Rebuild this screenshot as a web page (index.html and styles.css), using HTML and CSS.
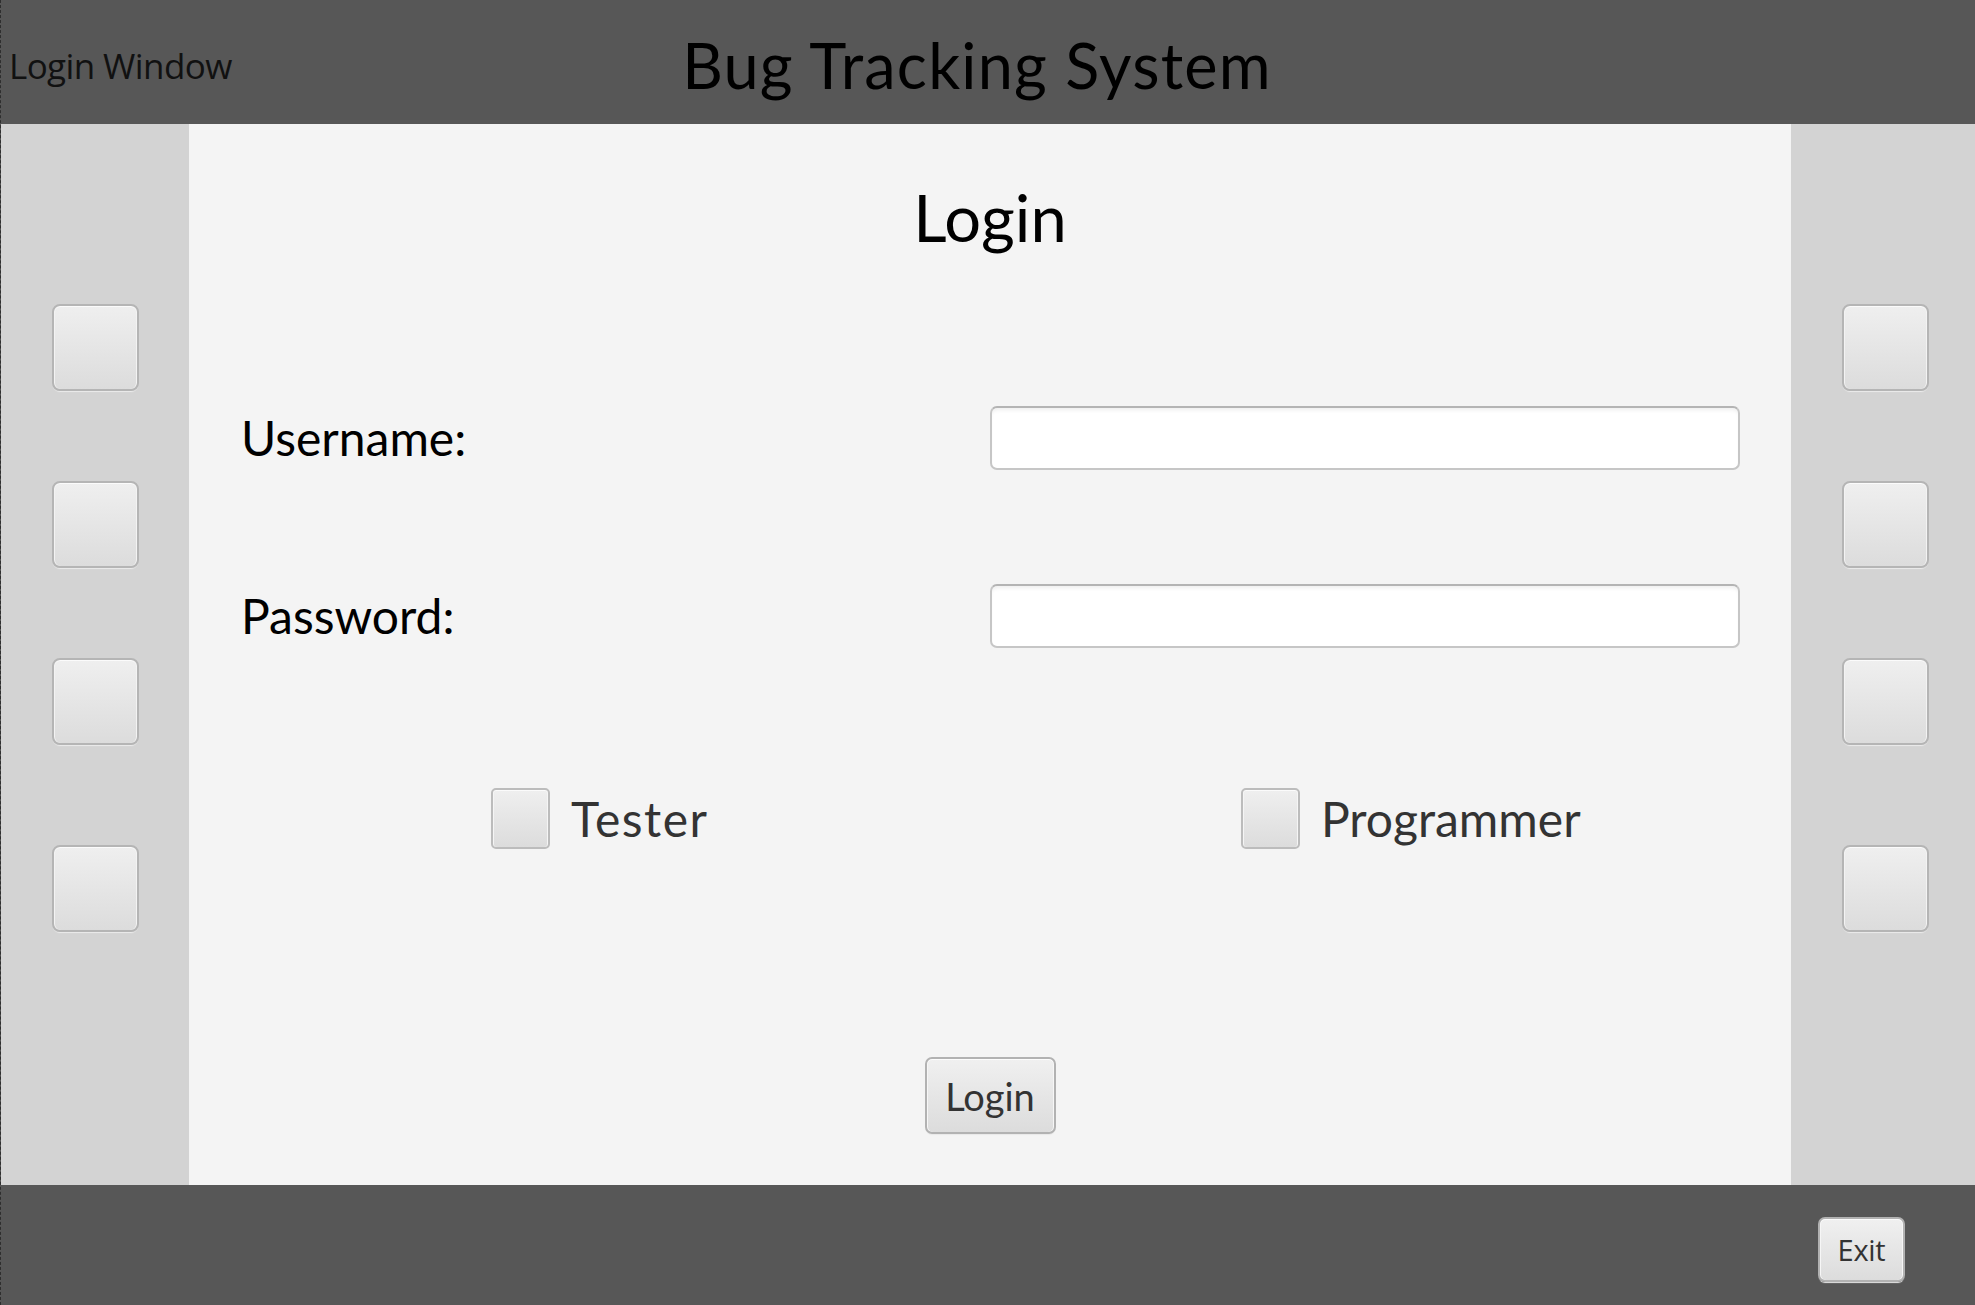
FILE: index.html
```html
<!DOCTYPE html>
<html lang="en">
<head>
<meta charset="utf-8">
<title>Login Window</title>
<link rel="stylesheet" href="styles.css">
</head>
<body>
<div class="window">
  <header class="topbar">
    <div class="win-title">Login Window</div>
    <h1 class="app-title">Bug Tracking System</h1>
    <div></div>
  </header>
  <div class="middle">
    <aside class="side side-left">
      <button class="sq" type="button"></button>
      <button class="sq" type="button"></button>
      <button class="sq" type="button"></button>
      <button class="sq sq-last" type="button"></button>
    </aside>
    <main class="center">
      <h2 class="heading">Login</h2>
      <div class="row row-user">
        <label class="lbl">Username:</label>
        <input class="field" type="text">
      </div>
      <div class="row row-pass">
        <label class="lbl">Password:</label>
        <input class="field" type="password">
      </div>
      <div class="roles">
        <label class="role"><span class="cb"></span><span class="role-text">Tester</span></label>
        <label class="role"><span class="cb"></span><span class="role-text">Programmer</span></label>
      </div>
      <div class="actions">
        <button class="btn btn-login" type="button">Login</button>
      </div>
    </main>
    <aside class="side side-right">
      <button class="sq" type="button"></button>
      <button class="sq" type="button"></button>
      <button class="sq" type="button"></button>
      <button class="sq sq-last" type="button"></button>
    </aside>
  </div>
  <footer class="bottombar">
    <button class="btn btn-exit" type="button">Exit</button>
  </footer>
</div>
</body>
</html>
```
FILE: styles.css
```css
* { box-sizing: border-box; }
html, body { margin: 0; padding: 0; }
body {
  width: 1975px;
  height: 1305px;
  overflow: hidden;
  background: #575757;
  font-family: "Lato", "Open Sans", sans-serif;
}
.window {
  display: flex;
  flex-direction: column;
  height: 1305px;
  border-left: 1px dashed #2e2e2e;
}
.topbar {
  height: 124px;
  background: #575757;
  display: grid;
  grid-template-columns: 1fr auto 1fr;
  align-items: center;
  padding: 0 30px 0 8px;
  line-height: 124px;
}
.win-title {
  font-family: "Open Sans", "Noto Sans", sans-serif;
  font-size: 35px;
  letter-spacing: -0.6px;
  color: #111;
  white-space: nowrap;
  padding-top: 4px;
}
.app-title {
  margin: 0;
  font-family: "Comic Sans MS", "Lato", sans-serif;
  font-weight: 400;
  font-size: 63px;
  letter-spacing: 1.2px;
  color: #000;
  white-space: nowrap;
  padding-top: 2px;
}
.middle {
  height: 1061px;
  display: flex;
}
.side {
  width: 188px;
  background: #d3d3d3;
  display: flex;
  flex-direction: column;
  align-items: center;
  padding-top: 180px;
  gap: 90px;
}
.side-right {
  width: 184px;
  padding-left: 5px;
}
.sq {
  width: 87px;
  height: 87px;
  flex: none;
  border: 2px solid #b5b5b5;
  border-radius: 8px;
  background: linear-gradient(#efefef, #dcdcdc);
  box-shadow: inset 0 1px 0 #fbfbfb, inset 1px 0 0 #f3f3f3, inset -1px 0 0 #f3f3f3, 0 2px 1px -1px #ececec;
  padding: 0;
}
.sq-last { margin-top: 10px; }
.center {
  flex: 1;
  background: #f4f4f4;
  display: flex;
  flex-direction: column;
  font-family: "Comic Sans MS", "Lato", sans-serif;
}
.heading {
  margin: 53px 0 0;
  text-align: center;
  font-weight: 400;
  font-size: 65px;
  line-height: 80px;
  color: #000;
}
.row {
  display: flex;
  align-items: center;
  justify-content: space-between;
  height: 63px;
  padding: 0 51px 0 52px;
}
.row-user { margin-top: 149px; }
.row-pass { margin-top: 115px; }
.lbl {
  font-size: 48px;
  line-height: 63px;
  color: #000;
}
.field {
  width: 750px;
  height: 64px;
  border: 2px solid #c6c6c6;
  border-top-color: #b4b4b4;
  border-radius: 7px;
  background: #fff;
  box-shadow: inset 0 4px 4px -2px rgba(0, 0, 0, 0.07);
  outline: none;
}
.roles {
  margin-top: 141px;
  display: grid;
  grid-template-columns: 750px 1fr;
  padding-left: 302px;
  height: 60px;
}
.role {
  display: flex;
  align-items: center;
  gap: 21px;
  font-size: 48px;
  line-height: 60px;
  color: #333;
}
.role:first-child .role-text { letter-spacing: 1.5px; }
.cb {
  width: 59px;
  height: 61px;
  flex: none;
  border: 2px solid #bcbcbc;
  border-radius: 5px;
  background: linear-gradient(#efefef, #dcdcdc);
  box-shadow: inset 0 1px 0 #fbfbfb, inset 1px 0 0 #f5f5f5, inset -1px 0 0 #f5f5f5;
}
.actions {
  margin-top: 209px;
  display: flex;
  justify-content: center;
}
.btn {
  border: 2px solid #b2b2b2;
  border-radius: 7px;
  background: linear-gradient(#f0f0f0, #dcdcdc);
  box-shadow: inset 0 1px 0 #fcfcfc, inset 1px 0 0 #f6f6f6, inset -1px 0 0 #f6f6f6, 0 2px 1px -1px #e8e8e8;
  color: #333;
  padding: 0;
}
.btn-login {
  width: 131px;
  height: 77px;
  font-family: "Comic Sans MS", "Lato", sans-serif;
  font-size: 38px;
}
.bottombar {
  height: 120px;
  background: #575757;
  display: flex;
  justify-content: flex-end;
  align-items: flex-start;
  padding: 32px 70px 0 0;
}
.btn-exit {
  width: 87px;
  height: 65px;
  font-family: "Open Sans", "Noto Sans", sans-serif;
  font-size: 29px;
  letter-spacing: -0.3px;
}
```
